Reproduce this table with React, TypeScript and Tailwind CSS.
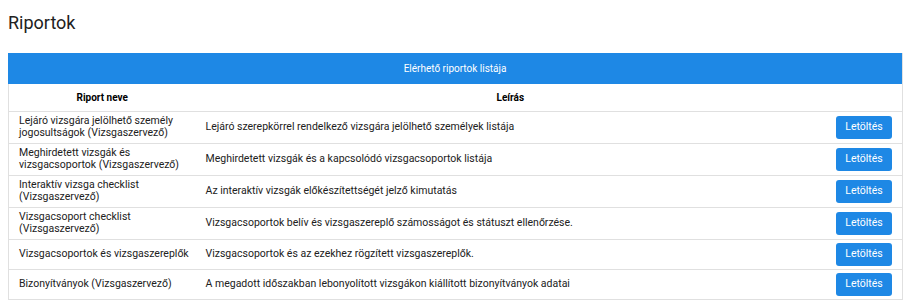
const reports = [
  {
    name: "Lejáró vizsgára jelölhető személy jogosultságok (Vizsgaszervező)",
    desc: "Lejáró szerepkörrel rendelkező vizsgára jelölhető személyek listája",
  },
  {
    name: "Meghirdetett vizsgák és vizsgacsoportok (Vizsgaszervező)",
    desc: "Meghirdetett vizsgák és a kapcsolódó vizsgacsoportok listája",
  },
  {
    name: "Interaktív vizsga checklist (Vizsgaszervező)",
    desc: "Az interaktív vizsgák előkészítettségét jelző kimutatás",
  },
  {
    name: "Vizsgacsoport checklist (Vizsgaszervező)",
    desc: "Vizsgacsoportok belív és vizsgaszereplő számosságot és státuszt ellenőrzése.",
  },
  {
    name: "Vizsgacsoportok és vizsgaszereplők",
    desc: "Vizsgacsoportok és az ezekhez rögzített vizsgaszereplők.",
  },
  {
    name: "Bizonyítványok (Vizsgaszervező)",
    desc: "A megadott időszakban lebonyolított vizsgákon kiállított bizonyítványok adatai",
  },
];

export default function App() {
  return (
    <div className="min-h-screen bg-white px-2 text-[#212121] font-['Roboto',sans-serif]">
      <h1 className="pt-[12px] text-[18px] leading-[22px] font-normal">Riportok</h1>

      <div className="mt-[19px] border-r border-b border-[#e0e0e0]">
        <div className="bg-[#1e88e5] h-[31px] flex items-center justify-center text-white text-[10px]">
          Elérhető riportok listája
        </div>
        <table className="w-full table-fixed border-collapse text-[10.5px]">
          <colgroup>
            <col className="w-[187px]" />
            <col />
            <col className="w-[77px]" />
          </colgroup>
          <thead>
            <tr className="h-[27px] border-l border-[#e0e0e0]">
              <th className="text-[10px] font-bold text-black text-center">Riport neve</th>
              <th className="text-[10px] font-bold text-black text-center">Leírás</th>
              <th />
            </tr>
          </thead>
          <tbody>
            {reports.map((r, i) => (
              <tr key={i} className="border-t border-l border-[#e0e0e0]">
                <td className="pl-[10px] pr-[2px] py-[3px] leading-[12.5px] align-middle">{r.name}</td>
                <td className="pl-[10px] py-[3px] leading-[12.5px] align-middle">{r.desc}</td>
                <td className="pr-[10px] py-[3px] text-right align-middle">
                  <button className="h-[23px] w-[56px] rounded-[3px] bg-[#1e88e5] text-white text-[10.5px] align-middle">
                    Letöltés
                  </button>
                </td>
              </tr>
            ))}
          </tbody>
        </table>
      </div>
    </div>
  );
}
